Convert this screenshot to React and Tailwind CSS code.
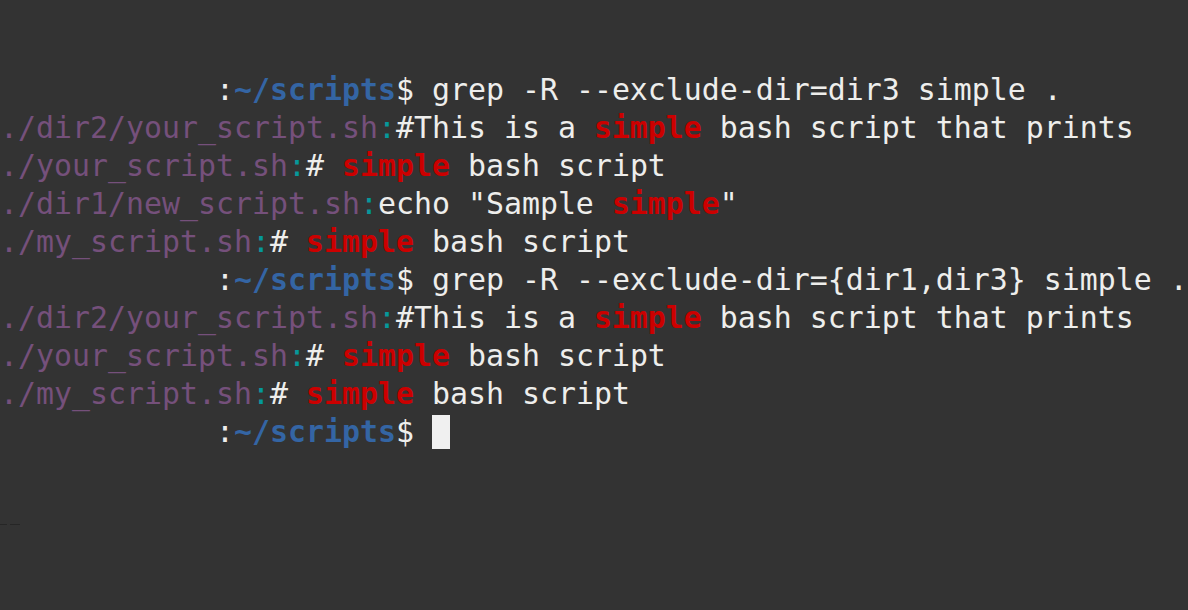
const C = {
  path: 'text-[#75507b]',
  sep: 'text-[#06989a]',
  hit: 'text-[#cc0000] font-bold',
  dir: 'text-[#3465a4] font-bold',
  txt: 'text-[#eeeeec]',
}

function Prompt({ cmd, cursor }) {
  return (
    <div>
      <span className={C.txt}>{'            :'}</span>
      <span className={C.dir}>~/scripts</span>
      <span className={C.txt}>$ </span>
      {cmd && <span className={C.txt}>{cmd}</span>}
      {cursor && <span className="inline-block w-[18px] h-[34px] align-[-7px] bg-[#f0f0f0]" />}
    </div>
  )
}

function Match({ file, before, after }) {
  return (
    <div>
      <span className={C.path}>{file}</span>
      <span className={C.sep}>:</span>
      <span className={C.txt}>{before}</span>
      <span className={C.hit}>simple</span>
      <span className={C.txt}>{after}</span>
    </div>
  )
}

export default function App() {
  return (
    <div className="w-[1188px] h-[610px] bg-[#333333] overflow-hidden pt-[71px] font-['DejaVu_Sans_Mono',monospace] text-[29.9px] leading-[38px] whitespace-pre">
      <Prompt cmd="grep -R --exclude-dir=dir3 simple ." />
      <Match file="./dir2/your_script.sh" before="#This is a " after=" bash script that prints" />
      <Match file="./your_script.sh" before="# " after=" bash script" />
      <Match file="./dir1/new_script.sh" before={'echo "Sample '} after={'"'} />
      <Match file="./my_script.sh" before="# " after=" bash script" />
      <Prompt cmd="grep -R --exclude-dir={dir1,dir3} simple ." />
      <Match file="./dir2/your_script.sh" before="#This is a " after=" bash script that prints" />
      <Match file="./your_script.sh" before="# " after=" bash script" />
      <Match file="./my_script.sh" before="# " after=" bash script" />
      <Prompt cursor />
      <div className="mt-[73px] flex gap-[3px]">
        <span className="w-[7px] h-px bg-[#262626]" />
        <span className="w-[10px] h-px bg-[#262626]" />
      </div>
    </div>
  )
}
